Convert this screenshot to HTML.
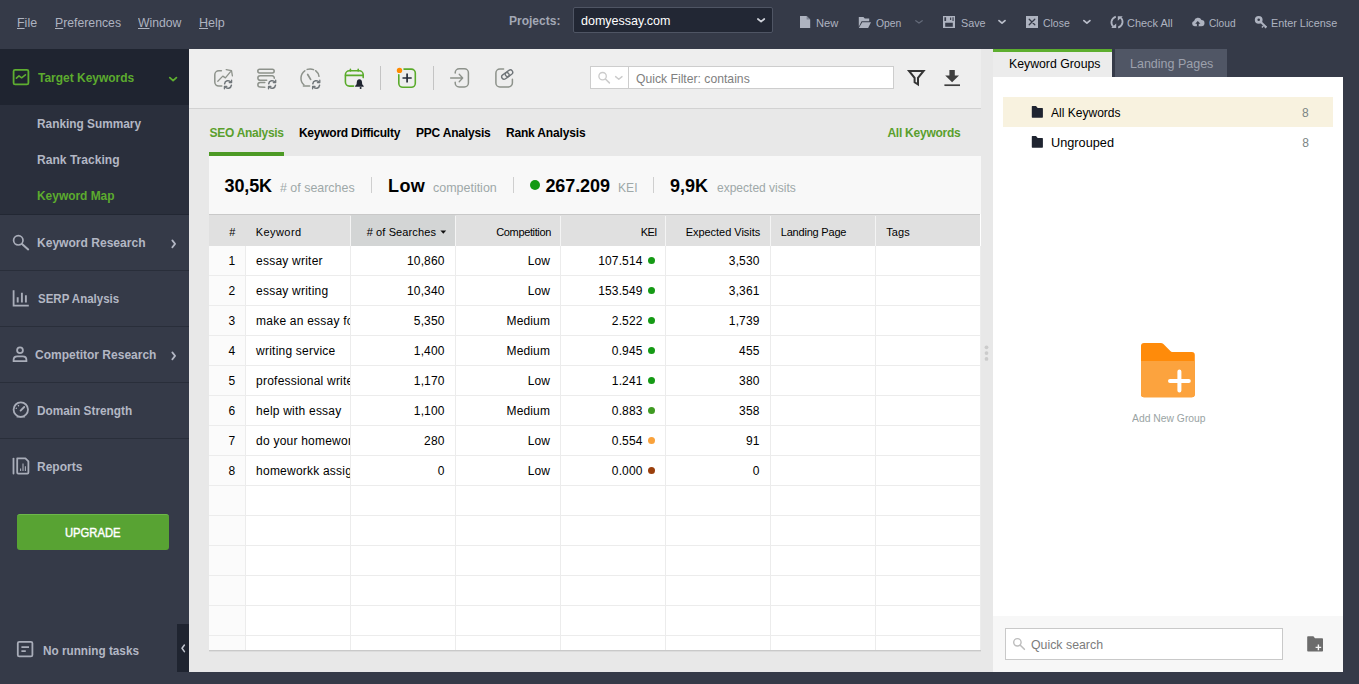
<!DOCTYPE html>
<html lang="en">
<head>
<meta charset="utf-8">
<title>Rank Tracker - Keyword Map</title>
<style>
*{box-sizing:border-box;margin:0;padding:0}
html,body{width:1359px;height:684px;overflow:hidden}
body{position:relative;background:#353a48;font-family:"Liberation Sans",sans-serif;font-size:13px;color:#111}
.a{position:absolute}
.t{position:absolute;white-space:nowrap;line-height:1}
.t u{text-decoration:underline;text-decoration-thickness:1px;text-underline-offset:1px}
svg{position:absolute;overflow:visible}
/* sidebar */
#hd{left:0;top:49px;width:189px;height:56px;background:#1f2430}
#sub{left:0;top:105px;width:189px;height:109px;background:#2a2f3c}
.sep{left:0;width:189px;height:1px;background:#292e3a}
#upg{left:17px;top:514px;width:152px;height:36px;background:#58a333;border-radius:3px;border-top:1px solid #6db84a}
#col{left:177px;top:624px;width:12px;height:48px;background:#1f2430}
/* main */
#main{left:189px;top:49px;width:804px;height:623px;background:#e8e8e8}
#tool{left:189px;top:49px;width:792px;height:59px;background:#eeeeee}
#tline{left:189px;top:108px;width:792px;height:1px;background:#d2d2d2}
.vd{width:1px;height:24px;top:66px;background:#c4c4c4}
#filt{left:590px;top:66px;width:304px;height:23px;background:#fff;border:1px solid #cdcdcd}
#filt i{position:absolute;left:37px;top:0;width:1px;height:21px;background:#cdcdcd}
#tabul{left:209px;top:152px;width:75px;height:4px;background:#4d9a25}
#stats{left:209px;top:156px;width:772px;height:58px;background:#f8f8f8}
.sd{width:1px;height:16px;top:177px;background:#cfcfcf}
#panel{left:209px;top:214px;width:772px;height:436px;background:#fff}
#psh{left:209px;top:650px;width:772px;height:2px;background:linear-gradient(#c9c9c9 0,#c9c9c9 50%,#dcdcdc 50%,#dcdcdc 100%)}
#subln{left:0;top:214px;width:189px;height:1px;background:#222733}
#thead{left:209px;top:214px;width:771px;height:32px;background:#e0e0e0;border-top:1px solid #c9c9c9}
#thsort{left:351px;top:215px;width:104px;height:31px;background:#d3d5d5}
.hs{top:216px;width:1px;height:30px;background:#f4f4f4}
#numcol{left:209px;top:246px;width:36px;height:404px;background:#fbfbfb}
.vl{top:246px;width:1px;height:404px;background:#ececec}
.hl{left:209px;width:771px;height:1px;background:#ececec}
.dot{width:7px;height:7px;border-radius:50%}
/* right */
#rtabA{left:993px;top:49px;width:119px;height:28px;background:#ececec;border-top:3px solid #5dae2f}
#rtabB{left:1115px;top:49px;width:112px;height:28px;background:#505665}
#rpan{left:993px;top:77px;width:350px;height:595px;background:#fff}
#rsel{left:1003px;top:97px;width:330px;height:30px;background:#f8f2df}
#rfoot{left:993px;top:616px;width:350px;height:56px;background:#f7f7f7}
#qs{left:1005px;top:628px;width:278px;height:32px;background:#fff;border:1px solid #c9c9c9}
#proj{left:573px;top:7px;width:200px;height:26px;background:#222734;border:1px solid #4f5564;border-radius:2px}
.cell{position:absolute;white-space:nowrap;line-height:1;font-size:12px;color:#000}
#kwclip{left:246px;top:246px;width:104px;height:404px;overflow:hidden}
</style>
</head>
<body>
<!-- top bar -->
<div id="proj" class="a"></div>
<!-- sidebar -->
<div id="hd" class="a"></div>
<div id="sub" class="a"></div>
<div id="subln" class="a"></div>
<div class="sep a" style="top:270px"></div>
<div class="sep a" style="top:326px"></div>
<div class="sep a" style="top:382px"></div>
<div class="sep a" style="top:438px"></div>
<div id="upg" class="a"></div>
<div id="col" class="a"></div>
<!-- main -->
<div id="main" class="a"></div>
<div id="tool" class="a"></div>
<div id="tline" class="a"></div>
<div class="vd a" style="left:380px"></div>
<div class="vd a" style="left:433px"></div>
<div id="filt" class="a"><i></i></div>
<div id="tabul" class="a"></div>
<div id="stats" class="a"></div>
<div class="sd a" style="left:371px"></div>
<div class="sd a" style="left:513px"></div>
<div class="sd a" style="left:653px"></div>
<div class="dot a" style="left:530px;top:180px;width:10px;height:10px;background:#129a12"></div>
<div id="panel" class="a"></div>
<div id="psh" class="a"></div>
<div id="numcol" class="a"></div>
<div class="vl a" style="left:245px"></div>
<div class="vl a" style="left:350px"></div>
<div class="vl a" style="left:455px"></div>
<div class="vl a" style="left:560px"></div>
<div class="vl a" style="left:665px"></div>
<div class="vl a" style="left:770px"></div>
<div class="vl a" style="left:875px"></div>
<div class="vl a" style="left:980px"></div>
<div class="hl a" style="top:275px"></div>
<div class="hl a" style="top:305px"></div>
<div class="hl a" style="top:335px"></div>
<div class="hl a" style="top:365px"></div>
<div class="hl a" style="top:395px"></div>
<div class="hl a" style="top:425px"></div>
<div class="hl a" style="top:455px"></div>
<div class="hl a" style="top:485px"></div>
<div class="hl a" style="top:515px"></div>
<div class="hl a" style="top:545px"></div>
<div class="hl a" style="top:575px"></div>
<div class="hl a" style="top:605px"></div>
<div class="hl a" style="top:635px"></div>
<div id="thead" class="a"></div>
<div id="thsort" class="a"></div>
<div class="hs a" style="left:350px"></div>
<div class="hs a" style="left:455px"></div>
<div class="hs a" style="left:560px"></div>
<div class="hs a" style="left:665px"></div>
<div class="hs a" style="left:770px"></div>
<div class="hs a" style="left:875px"></div>
<!-- right panel -->
<div id="rtabA" class="a"></div>
<div id="rtabB" class="a"></div>
<div id="rpan" class="a"></div>
<div id="rsel" class="a"></div>
<div id="rfoot" class="a"></div>
<div id="qs" class="a"></div>
<svg width="1359" height="684" viewBox="0 0 1359 684" style="left:0;top:0" fill="none" stroke-linecap="round" stroke-linejoin="round">
<!-- ===== top bar icons ===== -->
<g fill="#aeb3c0" stroke="none">
  <!-- new -->
  <path d="M800 16h6.6l3.6 3.6V28H800z"/>
  <path d="M806.6 16v3.6h3.6z" fill="#7d8392"/>
  <!-- open -->
  <path d="M858.8 17h4.6l1.4 1.6h4.4v2.6h-7.6l-2.8 5.6z"/>
  <path d="M862.2 22.2H871l-2.9 5.7h-9.3z"/>
  <!-- save -->
  <path d="M943 16h12v12h-12z"/>
  <path d="M944.400 17.300h1.700v3.600h-1.700zM952.500 17.300h1.100v3.600h-1.100zM950.100 17.500h1.100v2.600h-1.100zM945.200 22.700h7.600v4h-7.600z" fill="#353a48"/>
  <!-- close -->
  <path d="M1026 16h12v12h-12z"/>
  <!-- cloud -->
  <path d="M1194.6 26.3a2.7 2.7 0 0 1-.5-5.3 3.9 3.9 0 0 1 7.400-.9 3.100 3.100 0 0 1-.2 6.200z"/>
  <path d="M1197.800 20.900l2.600 2.800h-1.700v2.700h-1.800v-2.700h-1.700z" fill="#353a48"/>
</g>
<path d="M1029.200 19.200l5.600 5.600M1034.800 19.200l-5.600 5.600" stroke="#353a48" stroke-width="1.300"/>
<!-- check all -->
<g stroke="#aeb3c0" stroke-width="1.800" stroke-linecap="butt">
  <path d="M1115.800 16.600c-5.200 2-5.400 7.600-2.400 10"/>
  <path d="M1118.200 27.600c5.200-2 5.400-7.600 2.400-10"/>
</g>
<path d="M1111.200 28h5v-4.600zM1122.800 16.200h-5v4.600z" fill="#aeb3c0"/>
<!-- key -->
<g>
  <circle cx="1258.700" cy="19.800" r="2.600" stroke="#aeb3c0" stroke-width="2.600"/>
  <path d="M1260.800 22l5.600 5.400" stroke="#aeb3c0" stroke-width="2" stroke-linecap="butt"/>
  <path d="M1263.600 25.600l-1.700 1.900M1266.400 26.400l-1.500 1.700" stroke="#aeb3c0" stroke-width="1.400" stroke-linecap="butt"/>
</g>
<!-- chevrons -->
<path d="M757.900 19l3.200 2.700 3.200-2.700" stroke="#cfd2da" stroke-width="1.700"/>
<path d="M915.800 20.700l3.200 2.300 3.200-2.300" stroke="#646a79" stroke-width="1.300"/>
<path d="M999 20.600l3 2.500 3-2.500" stroke="#b9bdc9" stroke-width="1.800"/>
<path d="M1083.900 20.600l3 2.500 3-2.500" stroke="#b9bdc9" stroke-width="1.800"/>

<!-- ===== sidebar icons ===== -->
<rect x="13.600" y="69.800" width="14.800" height="14.600" rx="1.500" stroke="#5eae30" stroke-width="1.800"/>
<path d="M16.400 78.200l2.600-2.400 2.600 2 3.800-3" stroke="#5eae30" stroke-width="1.600"/>
<path d="M169.800 77.600l3.300 3 3.300-3" stroke="#5eae30" stroke-width="1.800"/>
<g stroke="#a9adb9">
  <!-- magnifier -->
  <circle cx="18.300" cy="240.300" r="4.700" stroke-width="1.700"/>
  <path d="M22 243.900l6.200 5.500" stroke-width="2"/>
  <!-- bars -->
  <path d="M13.600 290.200v15.400h15.200" stroke-width="1.800" stroke-linecap="butt" stroke-linejoin="miter"/>
  <path d="M17.700 297.200v5.400M21.900 292.800v9.800M25.900 295.200v7.400" stroke-width="1.900" stroke-linecap="butt"/>
  <!-- person -->
  <circle cx="20" cy="350.200" r="2.900" stroke-width="1.800"/>
  <path d="M13.600 361.200v-1.400c0-2 1.600-3.400 3.600-3.400h5.600c2 0 3.600 1.400 3.600 3.400v1.400z" stroke-width="1.800" stroke-linejoin="miter"/>
  <!-- gauge -->
  <circle cx="20.800" cy="409.600" r="7.200" stroke-width="1.800"/>
  <path d="M17 416.800h7.600" stroke-width="1.300"/>
  <path d="M20.600 410.600l3.600-3.600" stroke-width="1.900"/>
  <path d="M16.200 408.200l.2.100M18.400 405.600l.1.200" stroke-width="1.400"/>
  <!-- reports -->
  <path d="M13.500 458.600v15" stroke-width="1.800"/>
  <path d="M17.200 458.400h8.200l3 3v11.200a1 1 0 0 1-1 1h-9.200a1 1 0 0 1-1-1v-13.200a1 1 0 0 1 1-1z" stroke-width="1.800"/>
  <path d="M20.600 468.600v2.400M23 463.400v7.600M25.400 466.200v4.800" stroke-width="1.100" stroke-linecap="butt"/>
  <!-- tasks -->
  <rect x="17.800" y="641.800" width="14.600" height="14.600" rx="1.500" stroke-width="1.800"/>
  <path d="M21.400 647.200h7.600M21.400 651.200h4.400" stroke-width="1.800" stroke-linecap="butt"/>
</g>
<path d="M172.300 240.400l2.800 3.500-2.800 3.500" stroke="#b3b7c4" stroke-width="1.700"/>
<path d="M172.300 352.400l2.800 3.500-2.800 3.500" stroke="#b3b7c4" stroke-width="1.700"/>
<path d="M184.400 645l-2.400 3.300 2.400 3.300" stroke="#c3c7d1" stroke-width="1.500"/>

<!-- ===== toolbar icons ===== -->
<g stroke="#8d928b" stroke-width="1.500">
  <!-- 1 rank chart -->
  <path d="M221.400 70.800h-2.600a4 4 0 0 0-4 4v7.300a4 4 0 0 0 4 4h3"/>
  <path d="M217.800 81.300l5-5.200 2.600 1.800 6-7.300M226.200 69.600l5.300 1 .9 5.200" stroke-width="1.300"/>
  <!-- 2 list -->
  <rect x="257.800" y="69.200" width="16.400" height="3.700" rx="1.850"/>
  <path d="M274.300 78.200a2.300 2.300 0 0 0-2.200-2.400h-12a2.250 2.250 0 0 0 0 4.500h6.600"/>
  <path d="M264.800 82.600h-4.700a2.250 2.250 0 0 0 0 4.500l4.700.1"/>
  <!-- 3 gauge -->
  <path d="M303.900 84.800a9 9 0 0 1 .9-14"/>
  <path d="M307.200 69.400a9 9 0 0 1 6.400.2"/>
  <path d="M315.600 70.700a9 9 0 0 1 3.400 5.600"/>
  <path d="M303.400 86.100h6.200"/>
  <path d="M307.700 74.500l2.900 4.900" stroke-width="1.700"/>
  <!-- 6 import -->
  <path d="M455.200 73v-.2a4 4 0 0 1 4-4h5.200a4 4 0 0 1 4 4v10.200a4 4 0 0 1-4 4h-5.200a4 4 0 0 1-4-4v-.8"/>
  <path d="M450.600 78h11.800M459.200 74.200l3.500 3.800-3.500 3.800" stroke-width="1.300"/>
  <!-- 7 link -->
  <path d="M503.600 69.100h-3.700a4 4 0 0 0-4 4v9.900a4 4 0 0 0 4 4h8.500a4 4 0 0 0 4-4v-3.800"/>
</g>
<!-- refresh badges -->
<g stroke="#6f7579" stroke-width="1.500">
  <g>
    <path d="M224.600 83.800a3.500 3.500 0 0 1 6.300-1.700M231.400 85.200a3.500 3.500 0 0 1-6.300 1.700"/>
    <path d="M231.600 80.200v2.400h-2.400M224.400 88.800v-2.400h2.400" stroke-width="1.300"/>
  </g>
  <g transform="translate(44.1 0)">
    <path d="M224.600 83.800a3.500 3.500 0 0 1 6.300-1.700M231.400 85.200a3.500 3.500 0 0 1-6.300 1.700"/>
    <path d="M231.600 80.200v2.400h-2.400M224.400 88.800v-2.400h2.400" stroke-width="1.300"/>
  </g>
  <g transform="translate(88.2 0)">
    <path d="M224.600 83.800a3.500 3.500 0 0 1 6.300-1.700M231.400 85.200a3.500 3.500 0 0 1-6.300 1.700"/>
    <path d="M231.600 80.200v2.400h-2.400M224.400 88.800v-2.400h2.400" stroke-width="1.300"/>
  </g>
  <!-- chain -->
  <g transform="rotate(-36 507.200 74.600)">
    <rect x="501" y="72.200" width="8" height="4.800" rx="2.400" stroke-width="1.400"/>
    <rect x="505.400" y="72.200" width="8" height="4.800" rx="2.400" stroke-width="1.400"/>
  </g>
</g>
<!-- 4 calendar -->
<g stroke="#5aab2b" stroke-width="1.600">
  <path d="M353.600 86.100h-4.200a4 4 0 0 1-4-4v-7.300a4 4 0 0 1 4-4h9.800a4 4 0 0 1 4 4v2.800"/>
  <path d="M345.600 75.400h17.400M350.400 69.200v1.800M358.200 69.200v1.800"/>
</g>
<path d="M359.400 79.300c1.600 0 2.500 1.200 2.600 2.800l.2 2.200 1.500 1.700v.7h-8.600v-.7l1.500-1.700.2-2.200c.1-1.600 1-2.800 2.600-2.800z" fill="#1f2430"/>
<circle cx="360.600" cy="88.100" r="1" fill="#1f2430"/>
<!-- 5 add -->
<path d="M404 69.100h7.300a4 4 0 0 1 4 4v10.200a4 4 0 0 1-4 4h-8.500a4 4 0 0 1-4-4v-8.600" stroke="#5aab2b" stroke-width="1.600"/>
<circle cx="399.500" cy="70.400" r="2.700" fill="#ff8a00"/>
<path d="M402.500 78h9.200M407.100 73.400v9.200" stroke="#262b3a" stroke-width="1.700" stroke-linecap="butt"/>
<!-- filter field icons -->
<circle cx="602.600" cy="76.200" r="3.700" stroke="#cbcbcb" stroke-width="1.300"/>
<path d="M605.400 79l4 3.900" stroke="#cbcbcb" stroke-width="1.500"/>
<path d="M615.600 76.600l3.200 2.600 3.200-2.600" stroke="#cbcbcb" stroke-width="1.400"/>
<!-- funnel -->
<path d="M909 70.900h14.600l-5.600 7v6.500l-3.400-2.100v-4.400z" stroke="#353535" stroke-width="2" stroke-linejoin="miter"/>
<!-- download -->
<path d="M949.400 70h5.400v5.400h4.200l-6.900 6.800-6.900-6.800h4.200z" fill="#3e3e3e"/>
<path d="M944.400 85.200h15.600" stroke="#3e3e3e" stroke-width="1.700" stroke-linecap="butt"/>
<!-- sort arrow -->
<path d="M440.400 230.500h5.800l-2.900 3.200z" fill="#111"/>
<!-- splitter dots -->
<g fill="#cbcbcb"><circle cx="986.500" cy="347.300" r="1.900"/><circle cx="986.500" cy="353.100" r="1.900"/><circle cx="986.500" cy="358.900" r="1.900"/></g>
<!-- ===== right panel ===== -->
<g fill="#1f2430">
  <path d="M1032.400 106h3.600l1.700 1.900h4.600a.6.600 0 0 1 .6.600v8.600a.6.600 0 0 1-.6.600h-9.900a.6.600 0 0 1-.6-.6v-10.500a.6.600 0 0 1 .6-.6z"/>
  <path transform="translate(0 30)" d="M1032.400 106h3.600l1.700 1.900h4.600a.6.600 0 0 1 .6.600v8.600a.6.600 0 0 1-.6.600h-9.900a.6.600 0 0 1-.6-.6v-10.500a.6.600 0 0 1 .6-.6z"/>
</g>
<!-- big folder -->
<path d="M1144 343h16.800c1 0 1.900.4 2.600 1.100l7.200 7.200c.4.400.9.600 1.500.6h19.700a3 3 0 0 1 3 3v39.300a3 3 0 0 1-3 3H1144a3 3 0 0 1-3-3V346a3 3 0 0 1 3-3z" fill="#ff8b0a"/>
<path d="M1141 361h53.800v33.200a3 3 0 0 1-3 3H1144a3 3 0 0 1-3-3z" fill="#fca33e"/>
<path d="M1170 381h18.800M1179.400 371.600v18.800" stroke="#fff" stroke-width="4"/>
<!-- quick search -->
<circle cx="1017.400" cy="642.300" r="3.700" stroke="#bdbdbd" stroke-width="1.400"/>
<path d="M1020.300 645.200l4.100 4.100" stroke="#bdbdbd" stroke-width="1.600"/>
<!-- folder plus small -->
<path d="M1308 636.200h5.400l1.600 2h7.200a.8.800 0 0 1 .8.800v11.800a.8.800 0 0 1-.8.800H1308a.8.800 0 0 1-.8-.8V637a.8.800 0 0 1 .8-.8z" fill="#6c6c6c"/>
<path d="M1315.600 647.400h5.600M1318.400 644.600v5.600" stroke="#f7f7f7" stroke-width="1.400" stroke-linecap="butt"/>
</svg>

<span class="t" id="m1" style="left:16.88px;top:16.82px;font-size:12.5px;color:#aeb3c0;transform:scaleX(0.9965);transform-origin:0 0;"><u>F</u>ile</span>
<span class="t" id="m2" style="left:54.54px;top:16.82px;font-size:12.5px;color:#aeb3c0;transform:scaleX(0.9796);transform-origin:0 0;"><u>P</u>references</span>
<span class="t" id="m3" style="left:137.90px;top:16.82px;font-size:12.5px;color:#aeb3c0;transform:scaleX(0.9766);transform-origin:0 0;"><u>W</u>indow</span>
<span class="t" id="m4" style="left:198.69px;top:16.82px;font-size:12.5px;color:#aeb3c0;transform:scaleX(1.0034);transform-origin:0 0;"><u>H</u>elp</span>
<span class="t" id="pj" style="left:508.70px;top:14.00px;font-size:13px;color:#a3a8b5;font-weight:bold;transform:scaleX(0.9236);transform-origin:0 0;">Projects:</span>
<span class="t" id="dm" style="left:580.83px;top:14.00px;font-size:13px;color:#ffffff;transform:scaleX(0.9630);transform-origin:0 0;">domyessay.com</span>
<span class="t" id="b1" style="left:815.77px;top:17.69px;font-size:11px;color:#aeb3c0;transform:scaleX(1.0126);transform-origin:0 0;">New</span>
<span class="t" id="b2" style="left:876.12px;top:17.69px;font-size:11px;color:#aeb3c0;transform:scaleX(0.9415);transform-origin:0 0;">Open</span>
<span class="t" id="b3" style="left:960.66px;top:17.69px;font-size:11px;color:#aeb3c0;transform:scaleX(0.9812);transform-origin:0 0;">Save</span>
<span class="t" id="b4" style="left:1042.78px;top:17.69px;font-size:11px;color:#aeb3c0;transform:scaleX(0.9504);transform-origin:0 0;">Close</span>
<span class="t" id="b5" style="left:1127.11px;top:17.69px;font-size:11px;color:#aeb3c0;transform:scaleX(0.9953);transform-origin:0 0;">Check All</span>
<span class="t" id="b6" style="left:1208.77px;top:17.69px;font-size:11px;color:#aeb3c0;transform:scaleX(0.9242);transform-origin:0 0;">Cloud</span>
<span class="t" id="b7" style="left:1270.72px;top:17.69px;font-size:11px;color:#aeb3c0;transform:scaleX(0.9834);transform-origin:0 0;">Enter License</span>
<span class="t" id="s0" style="left:38.14px;top:72.32px;font-size:12.5px;color:#5cab2e;font-weight:bold;transform:scaleX(0.9575);transform-origin:0 0;">Target Keywords</span>
<span class="t" id="s1" style="left:37.08px;top:118.12px;font-size:12.5px;color:#b3b7c4;font-weight:bold;transform:scaleX(0.9483);transform-origin:0 0;">Ranking Summary</span>
<span class="t" id="s2" style="left:36.73px;top:154.12px;font-size:12.5px;color:#b3b7c4;font-weight:bold;transform:scaleX(0.9663);transform-origin:0 0;">Rank Tracking</span>
<span class="t" id="s3" style="left:36.64px;top:189.72px;font-size:12.5px;color:#5cab2e;font-weight:bold;transform:scaleX(0.9540);transform-origin:0 0;">Keyword Map</span>
<span class="t" id="s4" style="left:36.69px;top:236.92px;font-size:12.5px;color:#b3b7c4;font-weight:bold;transform:scaleX(0.9644);transform-origin:0 0;">Keyword Research</span>
<span class="t" id="s5" style="left:37.90px;top:292.72px;font-size:12.5px;color:#b3b7c4;font-weight:bold;transform:scaleX(0.9199);transform-origin:0 0;">SERP Analysis</span>
<span class="t" id="s6" style="left:35.48px;top:348.92px;font-size:12.5px;color:#b3b7c4;font-weight:bold;transform:scaleX(0.9606);transform-origin:0 0;">Competitor Research</span>
<span class="t" id="s7" style="left:36.95px;top:405.12px;font-size:12.5px;color:#b3b7c4;font-weight:bold;transform:scaleX(0.9453);transform-origin:0 0;">Domain Strength</span>
<span class="t" id="s8" style="left:37.46px;top:461.12px;font-size:12.5px;color:#b3b7c4;font-weight:bold;transform:scaleX(0.9597);transform-origin:0 0;">Reports</span>
<span class="t" id="s9" style="left:65.11px;top:526.84px;font-size:12px;color:#ffffff;transform:scaleX(0.9363);transform-origin:0 0;-webkit-text-stroke:0.4px #fff;">UPGRADE</span>
<span class="t" id="s10" style="left:43.31px;top:644.92px;font-size:12.5px;color:#b3b7c4;font-weight:bold;transform:scaleX(0.9398);transform-origin:0 0;">No running tasks</span>
<span class="t" id="t1" style="left:209.56px;top:126.84px;font-size:12px;color:#5a9f2d;font-weight:bold;letter-spacing:-0.282px;">SEO Analysis</span>
<span class="t" id="t2" style="left:298.89px;top:126.84px;font-size:12px;color:#000;font-weight:bold;letter-spacing:-0.226px;">Keyword Difficulty</span>
<span class="t" id="t3" style="left:415.89px;top:126.84px;font-size:12px;color:#000;font-weight:bold;letter-spacing:-0.190px;">PPC Analysis</span>
<span class="t" id="t4" style="left:505.89px;top:126.84px;font-size:12px;color:#000;font-weight:bold;letter-spacing:-0.157px;">Rank Analysis</span>
<span class="t" id="t5" style="left:887.46px;top:126.84px;font-size:12px;color:#5a9f2d;font-weight:bold;letter-spacing:-0.251px;">All Keywords</span>
<span class="t" id="qf" style="left:635.64px;top:71.90px;font-size:13px;color:#808080;transform:scaleX(0.9369);transform-origin:0 0;">Quick Filter: contains</span>
<span class="t" id="k1" style="left:224.47px;top:177.26px;font-size:18px;color:#000;font-weight:bold;letter-spacing:-0.102px;">30,5K</span>
<span class="t" id="k1l" style="left:280.10px;top:180.50px;font-size:13px;color:#9ea8a8;transform:scaleX(0.9558);transform-origin:0 0;"># of searches</span>
<span class="t" id="k2" style="left:388.07px;top:177.26px;font-size:18px;color:#000;font-weight:bold;letter-spacing:0.326px;">Low</span>
<span class="t" id="k2l" style="left:432.90px;top:180.50px;font-size:13px;color:#9ea8a8;transform:scaleX(0.9591);transform-origin:0 0;">competition</span>
<span class="t" id="k3" style="left:545.42px;top:177.26px;font-size:18px;color:#000;font-weight:bold;letter-spacing:-0.096px;">267.209</span>
<span class="t" id="k3l" style="left:618.09px;top:180.50px;font-size:13px;color:#9ea8a8;transform:scaleX(0.9309);transform-origin:0 0;">KEI</span>
<span class="t" id="k4" style="left:669.92px;top:177.26px;font-size:18px;color:#000;font-weight:bold;letter-spacing:0.030px;">9,9K</span>
<span class="t" id="k4l" style="left:716.70px;top:180.50px;font-size:13px;color:#9ea8a8;transform:scaleX(0.9240);transform-origin:0 0;">expected visits</span>
<span class="t" id="h0" style="left:229.31px;top:227.19px;font-size:11px;color:#000;">#</span>
<span class="t" id="h1" style="left:255.76px;top:227.19px;font-size:11px;color:#000;letter-spacing:0.427px;">Keyword</span>
<span class="t" id="h2" style="left:366.69px;top:227.19px;font-size:11px;color:#000;letter-spacing:0.113px;"># of Searches</span>
<span class="t" id="h3" style="left:496.29px;top:227.19px;font-size:11px;color:#000;letter-spacing:-0.370px;">Competition</span>
<span class="t" id="h4" style="left:640.87px;top:227.19px;font-size:11px;color:#000;letter-spacing:-0.686px;">KEI</span>
<span class="t" id="h5" style="left:685.63px;top:227.19px;font-size:11px;color:#000;letter-spacing:-0.029px;">Expected Visits</span>
<span class="t" id="h6" style="left:780.72px;top:227.19px;font-size:11px;color:#000;letter-spacing:-0.197px;">Landing Page</span>
<span class="t" id="h7" style="left:886.19px;top:227.19px;font-size:11px;color:#000;letter-spacing:0.150px;">Tags</span>
<span class="t" id="r1" style="left:1008.73px;top:56.90px;font-size:13px;color:#000;transform:scaleX(0.9445);transform-origin:0 0;">Keyword Groups</span>
<span class="t" id="r2" style="left:1130.49px;top:56.90px;font-size:13px;color:#9da1ad;transform:scaleX(0.9611);transform-origin:0 0;">Landing Pages</span>
<span class="t" id="r3" style="left:1051.38px;top:106.00px;font-size:13px;color:#000;transform:scaleX(0.9257);transform-origin:0 0;">All Keywords</span>
<span class="t" id="r4" style="left:1050.85px;top:135.80px;font-size:13px;color:#000;transform:scaleX(0.9789);transform-origin:0 0;">Ungrouped</span>
<span class="t" id="r5" style="left:1302.05px;top:106.84px;font-size:12px;color:#7b8585;">8</span>
<span class="t" id="r6" style="left:1302.35px;top:136.64px;font-size:12px;color:#7b8585;">8</span>
<span class="t" id="r7" style="left:1131.89px;top:414.14px;font-size:10px;color:#9aa4a4;transform:scaleX(1.0345);transform-origin:0 0;">Add New Group</span>
<span class="t" id="r8" style="left:1031.31px;top:638.40px;font-size:13px;color:#7c7c7c;transform:scaleX(0.9493);transform-origin:0 0;">Quick search</span>
<span class="cell" style="left:228.5px;top:254.59px;color:#000;letter-spacing:0.12px;">1</span>
<span class="cell" style="right:914.5px;top:254.59px;color:#000;letter-spacing:0.12px;">10,860</span>
<span class="cell" style="right:809px;top:254.59px;color:#000;letter-spacing:0.12px;">Low</span>
<span class="cell" style="right:716.5px;top:254.59px;color:#000;letter-spacing:0.12px;">107.514</span>
<div class="dot a" style="left:648px;top:257px;background:#159a15"></div>
<span class="cell" style="right:599.5px;top:254.59px;color:#000;letter-spacing:0.12px;">3,530</span>
<span class="cell" style="left:228.5px;top:284.59px;color:#000;letter-spacing:0.12px;">2</span>
<span class="cell" style="right:914.5px;top:284.59px;color:#000;letter-spacing:0.12px;">10,340</span>
<span class="cell" style="right:809px;top:284.59px;color:#000;letter-spacing:0.12px;">Low</span>
<span class="cell" style="right:716.5px;top:284.59px;color:#000;letter-spacing:0.12px;">153.549</span>
<div class="dot a" style="left:648px;top:287px;background:#159a15"></div>
<span class="cell" style="right:599.5px;top:284.59px;color:#000;letter-spacing:0.12px;">3,361</span>
<span class="cell" style="left:228.5px;top:314.59px;color:#000;letter-spacing:0.12px;">3</span>
<span class="cell" style="right:914.5px;top:314.59px;color:#000;letter-spacing:0.12px;">5,350</span>
<span class="cell" style="right:809px;top:314.59px;color:#000;letter-spacing:0.12px;">Medium</span>
<span class="cell" style="right:716.5px;top:314.59px;color:#000;letter-spacing:0.12px;">2.522</span>
<div class="dot a" style="left:648px;top:317px;background:#159a15"></div>
<span class="cell" style="right:599.5px;top:314.59px;color:#000;letter-spacing:0.12px;">1,739</span>
<span class="cell" style="left:228.5px;top:344.59px;color:#000;letter-spacing:0.12px;">4</span>
<span class="cell" style="right:914.5px;top:344.59px;color:#000;letter-spacing:0.12px;">1,400</span>
<span class="cell" style="right:809px;top:344.59px;color:#000;letter-spacing:0.12px;">Medium</span>
<span class="cell" style="right:716.5px;top:344.59px;color:#000;letter-spacing:0.12px;">0.945</span>
<div class="dot a" style="left:648px;top:347px;background:#159a15"></div>
<span class="cell" style="right:599.5px;top:344.59px;color:#000;letter-spacing:0.12px;">455</span>
<span class="cell" style="left:228.5px;top:374.59px;color:#000;letter-spacing:0.12px;">5</span>
<span class="cell" style="right:914.5px;top:374.59px;color:#000;letter-spacing:0.12px;">1,170</span>
<span class="cell" style="right:809px;top:374.59px;color:#000;letter-spacing:0.12px;">Low</span>
<span class="cell" style="right:716.5px;top:374.59px;color:#000;letter-spacing:0.12px;">1.241</span>
<div class="dot a" style="left:648px;top:377px;background:#159a15"></div>
<span class="cell" style="right:599.5px;top:374.59px;color:#000;letter-spacing:0.12px;">380</span>
<span class="cell" style="left:228.5px;top:404.59px;color:#000;letter-spacing:0.12px;">6</span>
<span class="cell" style="right:914.5px;top:404.59px;color:#000;letter-spacing:0.12px;">1,100</span>
<span class="cell" style="right:809px;top:404.59px;color:#000;letter-spacing:0.12px;">Medium</span>
<span class="cell" style="right:716.5px;top:404.59px;color:#000;letter-spacing:0.12px;">0.883</span>
<div class="dot a" style="left:648px;top:407px;background:#3f9a22"></div>
<span class="cell" style="right:599.5px;top:404.59px;color:#000;letter-spacing:0.12px;">358</span>
<span class="cell" style="left:228.5px;top:434.59px;color:#000;letter-spacing:0.12px;">7</span>
<span class="cell" style="right:914.5px;top:434.59px;color:#000;letter-spacing:0.12px;">280</span>
<span class="cell" style="right:809px;top:434.59px;color:#000;letter-spacing:0.12px;">Low</span>
<span class="cell" style="right:716.5px;top:434.59px;color:#000;letter-spacing:0.12px;">0.554</span>
<div class="dot a" style="left:648px;top:437px;background:#f9a23c"></div>
<span class="cell" style="right:599.5px;top:434.59px;color:#000;letter-spacing:0.12px;">91</span>
<span class="cell" style="left:228.5px;top:464.59px;color:#000;letter-spacing:0.12px;">8</span>
<span class="cell" style="right:914.5px;top:464.59px;color:#000;letter-spacing:0.12px;">0</span>
<span class="cell" style="right:809px;top:464.59px;color:#000;letter-spacing:0.12px;">Low</span>
<span class="cell" style="right:716.5px;top:464.59px;color:#000;letter-spacing:0.12px;">0.000</span>
<div class="dot a" style="left:648px;top:467px;background:#9a3f0c"></div>
<span class="cell" style="right:599.5px;top:464.59px;color:#000;letter-spacing:0.12px;">0</span>
<div id="kwclip" class="a"><span class="cell" style="left:10.1px;top:8.59px;color:#000;letter-spacing:0.22px;">essay writer</span>
<span class="cell" style="left:10.1px;top:38.59px;color:#000;letter-spacing:0.22px;">essay writing</span>
<span class="cell" style="left:10.1px;top:68.59px;color:#000;letter-spacing:0.22px;">make an essay for me</span>
<span class="cell" style="left:10.1px;top:98.59px;color:#000;letter-spacing:0.22px;">writing service</span>
<span class="cell" style="left:10.1px;top:128.59px;color:#000;letter-spacing:0.22px;">professional writers</span>
<span class="cell" style="left:10.1px;top:158.59px;color:#000;letter-spacing:0.22px;">help with essay</span>
<span class="cell" style="left:10.1px;top:188.59px;color:#000;letter-spacing:0.22px;">do your homework</span>
<span class="cell" style="left:10.1px;top:218.59px;color:#000;letter-spacing:0.22px;">homeworkk assignment</span></div>
</body>
</html>
